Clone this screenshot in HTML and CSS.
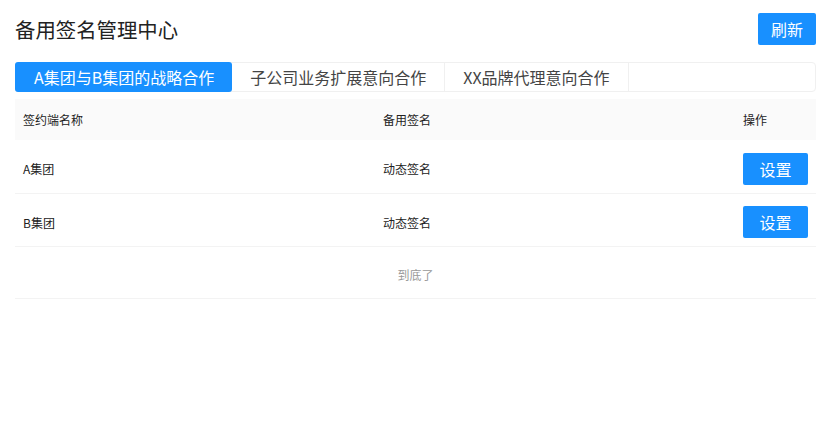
FILE: index.html
```html
<!DOCTYPE html>
<html lang="zh-CN">
<head>
<meta charset="utf-8">
<title>备用签名管理中心</title>
<link rel="stylesheet" href="styles.css">
</head>
<body>
<div class="page">
  <div class="topbar">
    <h1 class="title">备用签名管理中心</h1>
    <button class="btn btn-refresh">刷新</button>
  </div>
  <div class="tabs">
    <div class="tab active">A集团与B集团的战略合作</div>
    <div class="tab">子公司业务扩展意向合作</div>
    <div class="tab">XX品牌代理意向合作</div>
  </div>
  <table class="table">
    <colgroup>
      <col class="c1"><col class="c2"><col class="c3">
    </colgroup>
    <thead>
      <tr><th>签约端名称</th><th>备用签名</th><th>操作</th></tr>
    </thead>
    <tbody>
      <tr><td>A集团</td><td>动态签名</td><td><button class="btn btn-set">设置</button></td></tr>
      <tr><td>B集团</td><td>动态签名</td><td><button class="btn btn-set">设置</button></td></tr>
      <tr class="end"><td colspan="3">到底了</td></tr>
    </tbody>
  </table>
</div>
</body>
</html>
```
FILE: styles.css
```css
* { box-sizing: border-box; }
html, body { margin: 0; padding: 0; background: #fff; }
body {
  font-family: "Noto Sans CJK SC", "Noto Sans", sans-serif;
  color: #333;
}
.page { padding: 13px 14px 0 15px; }
.topbar {
  display: flex;
  align-items: center;
  justify-content: space-between;
  height: 32px;
}
.title {
  margin: 0;
  font-size: 20.4px;
  font-weight: 400;
  color: #222;
  line-height: 32px;
}
.btn {
  border: none;
  background: #1890ff;
  color: #fff;
  font-family: inherit;
  font-size: 16px;
  border-radius: 2px;
  padding: 0;
  cursor: pointer;
}
.btn-refresh { width: 58px; height: 32px; }
.tabs {
  margin-top: 17px;
  display: flex;
  height: 30px;
  border: 1px solid #f0f0f0;
  border-radius: 4px;
}
.tab {
  padding: 0 18px;
  font-size: 16px;
  line-height: 28px;
  color: #444;
  border-right: 1px solid #f0f0f0;
  white-space: nowrap;
}
.tab.active {
  background: #1890ff;
  color: #fff;
  border-radius: 3px;
  margin: -1px 0 -1px -1px;
  line-height: 30px;
  border-right: none;
  padding: 0 18px 0 19px;
}
.table {
  margin-top: 7px;
  width: 100%;
  border-collapse: collapse;
  font-size: 12px;
}
.c1 { width: 360px; }
.c2 { width: 360px; }
.table th {
  background: #fafafa;
  height: 41px;
  text-align: left;
  font-weight: 400;
  padding: 0 8px;
  color: #222;
}
.table td {
  height: 53px;
  padding: 5px 8px 0;
  border-bottom: 1px solid #f3f3f3;
  color: #222;
}
.btn-set { width: 65px; height: 32px; }
.table tr.end td {
  text-align: center;
  color: #999;
  height: 52px;
}
```
